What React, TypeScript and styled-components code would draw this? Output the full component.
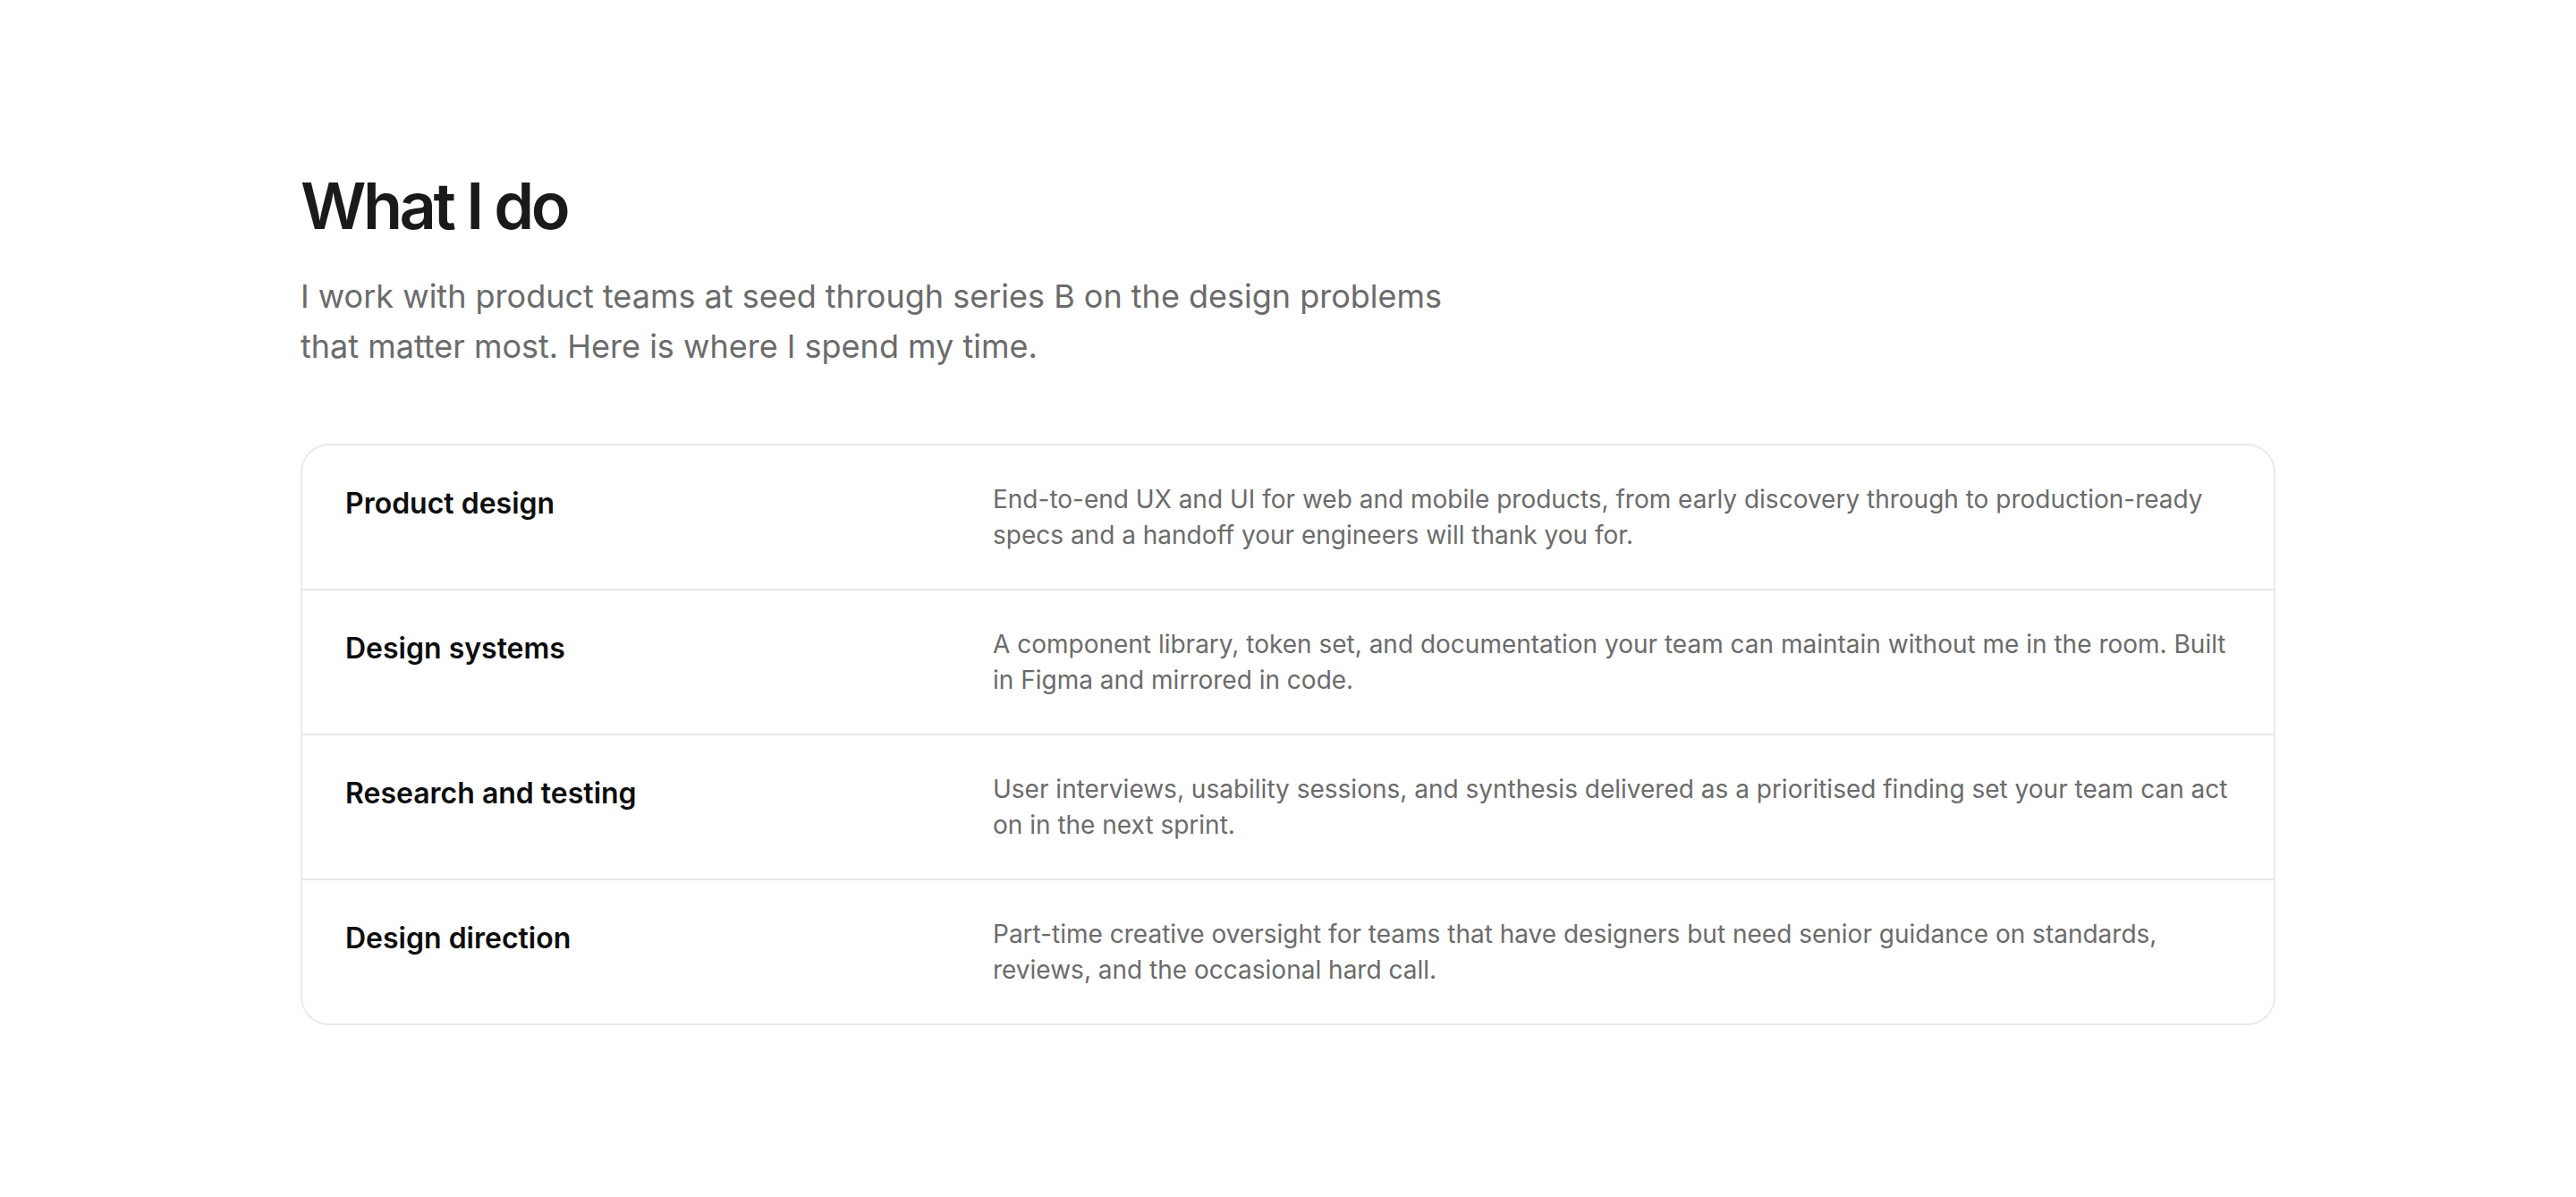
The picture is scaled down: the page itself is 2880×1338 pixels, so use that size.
import React from "react";
import styled, { createGlobalStyle } from "styled-components";

const GlobalStyle = createGlobalStyle`
  html, body {
    margin: 0;
    padding: 0;
    background: #ffffff;
  }
  body {
    font-family: Inter, "Noto Sans", "Liberation Sans", sans-serif;
    -webkit-font-smoothing: antialiased;
  }
  * { box-sizing: border-box; }
`;

const Section = styled.section`
  padding: 190px 0 160px;
`;

const Container = styled.div`
  width: 2208px;
  margin: 0 auto;
`;

const Heading = styled.h2`
  margin: 0;
  font-size: 72px;
  line-height: 1.1;
  font-weight: 600;
  letter-spacing: -0.048em;
  color: #1a1a1a;
`;

const Lead = styled.p`
  margin: 34px 0 0;
  max-width: 1320px;
  font-size: 36px;
  line-height: 56px;
  font-weight: 400;
  color: #6b6b6b;
`;

const Card = styled.div`
  margin-top: 81px;
  border: 2px solid #ebebeb;
  border-radius: 32px;
  overflow: hidden;
  background: #ffffff;
`;

const Row = styled.div<{ $first?: boolean }>`
  display: grid;
  grid-template-columns: 1fr 2fr;
  column-gap: 32px;
  padding: 40px 48px;
  border-top: ${(p) => (p.$first ? "none" : "2px solid #e8e8e8")};
`;

const Title = styled.h3`
  margin: 0;
  font-size: 32px;
  line-height: 50px;
  font-weight: 600;
  color: #0d0d0d;
`;

const Desc = styled.p`
  margin: 0;
  font-size: 28px;
  line-height: 40px;
  font-weight: 400;
  color: #6b6b6b;
`;

const services = [
  {
    title: "Product design",
    desc: "End-to-end UX and UI for web and mobile products, from early discovery through to production-ready specs and a handoff your engineers will thank you for.",
  },
  {
    title: "Design systems",
    desc: "A component library, token set, and documentation your team can maintain without me in the room. Built in Figma and mirrored in code.",
  },
  {
    title: "Research and testing",
    desc: "User interviews, usability sessions, and synthesis delivered as a prioritised finding set your team can act on in the next sprint.",
  },
  {
    title: "Design direction",
    desc: "Part-time creative oversight for teams that have designers but need senior guidance on standards, reviews, and the occasional hard call.",
  },
];

export default function App() {
  return (
    <>
      <GlobalStyle />
      <Section>
        <Container>
          <Heading>What I do</Heading>
          <Lead>
            I work with product teams at seed through series B on the design problems that matter most. Here is where I spend my time.
          </Lead>
          <Card>
            {services.map((s, i) => (
              <Row key={s.title} $first={i === 0}>
                <Title>{s.title}</Title>
                <Desc>{s.desc}</Desc>
              </Row>
            ))}
          </Card>
        </Container>
      </Section>
    </>
  );
}
